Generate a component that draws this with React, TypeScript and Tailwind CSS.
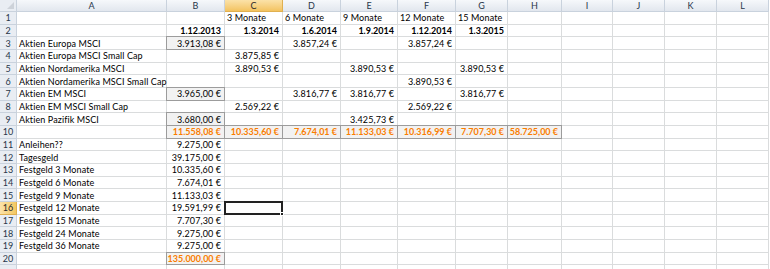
import { Fragment } from 'react';

type Cell = { v: string; align?: 'l' | 'r'; bold?: boolean; style?: 'input' | 'calc' };

const cols = ['A', 'B', 'C', 'D', 'E', 'F', 'G', 'H', 'I', 'J', 'K', 'L'];

const r = (v: string, extra: Partial<Cell> = {}): Cell => ({ v, align: 'r', ...extra });
const calc = (v: string): Cell => ({ v, align: 'r', bold: true, style: 'calc' });

// sheet contents, keyed by row -> column letter
const rows: Record<number, Record<string, Cell>> = {
  1: { C: { v: '3 Monate' }, D: { v: '6 Monate' }, E: { v: '9 Monate' }, F: { v: '12 Monate' }, G: { v: '15 Monate' } },
  2: {
    B: r('1.12.2013', { bold: true }),
    C: r('1.3.2014', { bold: true }),
    D: r('1.6.2014', { bold: true }),
    E: r('1.9.2014', { bold: true }),
    F: r('1.12.2014', { bold: true }),
    G: r('1.3.2015', { bold: true }),
  },
  3: { A: { v: 'Aktien Europa MSCI' }, B: r('3.913,08 €', { style: 'input' }), D: r('3.857,24 €'), F: r('3.857,24 €') },
  4: { A: { v: 'Aktien Europa MSCI Small Cap' }, C: r('3.875,85 €') },
  5: { A: { v: 'Aktien Nordamerika MSCI' }, C: r('3.890,53 €'), E: r('3.890,53 €'), G: r('3.890,53 €') },
  6: { A: { v: 'Aktien Nordamerika MSCI Small Cap' }, F: r('3.890,53 €') },
  7: { A: { v: 'Aktien EM MSCI' }, B: r('3.965,00 €', { style: 'input' }), D: r('3.816,77 €'), E: r('3.816,77 €'), G: r('3.816,77 €') },
  8: { A: { v: 'Aktien EM MSCI Small Cap' }, C: r('2.569,22 €'), F: r('2.569,22 €') },
  9: { A: { v: 'Aktien Pazifik MSCI' }, B: r('3.680,00 €', { style: 'input' }), E: r('3.425,73 €') },
  10: {
    B: calc('11.558,08 €'),
    C: calc('10.335,60 €'),
    D: calc('7.674,01 €'),
    E: calc('11.133,03 €'),
    F: calc('10.316,99 €'),
    G: calc('7.707,30 €'),
    H: calc('58.725,00 €'),
  },
  11: { A: { v: 'Anleihen??' }, B: r('9.275,00 €') },
  12: { A: { v: 'Tagesgeld' }, B: r('39.175,00 €') },
  13: { A: { v: 'Festgeld 3 Monate' }, B: r('10.335,60 €') },
  14: { A: { v: 'Festgeld 6 Monate' }, B: r('7.674,01 €') },
  15: { A: { v: 'Festgeld 9 Monate' }, B: r('11.133,03 €') },
  16: { A: { v: 'Festgeld 12 Monate' }, B: r('19.591,99 €') },
  17: { A: { v: 'Festgeld 15 Monate' }, B: r('7.707,30 €') },
  18: { A: { v: 'Festgeld 24 Monate' }, B: r('9.275,00 €') },
  19: { A: { v: 'Festgeld 36 Monate' }, B: r('9.275,00 €') },
  20: { B: calc('135.000,00 €') },
};

const selCol = 'C';
const selRow = 16;

function ColHeader({ label }: { label: string }) {
  const active = label === selCol;
  return (
    <div
      className={
        'flex items-center justify-center border-r border-b text-[9px] leading-none ' +
        (active
          ? 'bg-gradient-to-b from-[#fbe2a8] to-[#f3c35f] border-[#e0b050] text-[#2b2b2b]'
          : 'bg-gradient-to-b from-[#f6f8fb] to-[#e2e7ee] border-[#c9d2dd] text-[#27364a]')
      }
    >
      {label}
    </div>
  );
}

function RowHeader({ n }: { n: number }) {
  const active = n === selRow;
  return (
    <div
      className={
        'flex items-center justify-center border-r border-b text-[9px] leading-none ' +
        (active
          ? 'bg-gradient-to-r from-[#fbe2a8] to-[#f3c860] border-[#e0b050] text-[#2b2b2b]'
          : 'bg-[#e9edf3] border-[#c9d2dd] text-[#27364a]')
      }
    >
      {n <= 20 ? n : ''}
    </div>
  );
}

function SheetCell({ cell, selected }: { cell?: Cell; selected: boolean }) {
  const boxed = cell?.style;
  return (
    <div
      className={
        'relative flex items-center whitespace-nowrap border-r border-b border-[#dadcdd] text-[9px] leading-none ' +
        (cell?.align === 'r' ? 'justify-end pr-[3px] ' : 'justify-start pl-[2px] ') +
        (boxed ? 'bg-[#f2f2f2] ' : '') +
        (cell?.style === 'calc' ? 'text-[#fa7d00] ' : 'text-black ') +
        (cell?.bold ? 'font-bold' : 'tracking-[0.1px]')
      }
    >
      {cell && <span className="relative z-10">{cell.v}</span>}
      {boxed && (
        <span className="pointer-events-none absolute -left-px -top-px -right-px -bottom-px border border-[#9c9c9c]" />
      )}
      {selected && (
        <>
          <span className="pointer-events-none absolute -left-px -top-px -right-px -bottom-px z-20 border-2 border-[#222]" />
          <span className="absolute -right-[2px] -bottom-[2px] z-30 h-[4px] w-[4px] border border-white bg-[#222]" />
        </>
      )}
    </div>
  );
}

export default function App() {
  return (
    <div
      className="h-[269px] w-[770px] overflow-hidden bg-white"
      style={{ fontFamily: 'Lato, "Open Sans", sans-serif' }}
    >
      <div className="grid grid-cols-[17px_150px_58px_58px_58px_57px_58px_52px_54px_51px_52px_52px_52px] grid-rows-[12px_repeat(21,12.68px)]">
        {/* corner with select-all triangle */}
        <div className="relative border-r border-b border-[#c9d2dd] bg-[#e9edf3]">
          <svg className="absolute right-[2px] bottom-[2px]" width="7" height="7" viewBox="0 0 7 7">
            <polygon points="7,0 7,7 0,7" fill="#cdd2d9" />
          </svg>
        </div>
        {cols.map((c) => (
          <ColHeader key={c} label={c} />
        ))}

        {Array.from({ length: 21 }, (_, i) => i + 1).map((n) => (
          <Fragment key={n}>
            <RowHeader n={n} />
            {cols.map((c) => (
              <SheetCell key={c} cell={rows[n]?.[c]} selected={n === selRow && c === selCol} />
            ))}
          </Fragment>
        ))}
      </div>
    </div>
  );
}
